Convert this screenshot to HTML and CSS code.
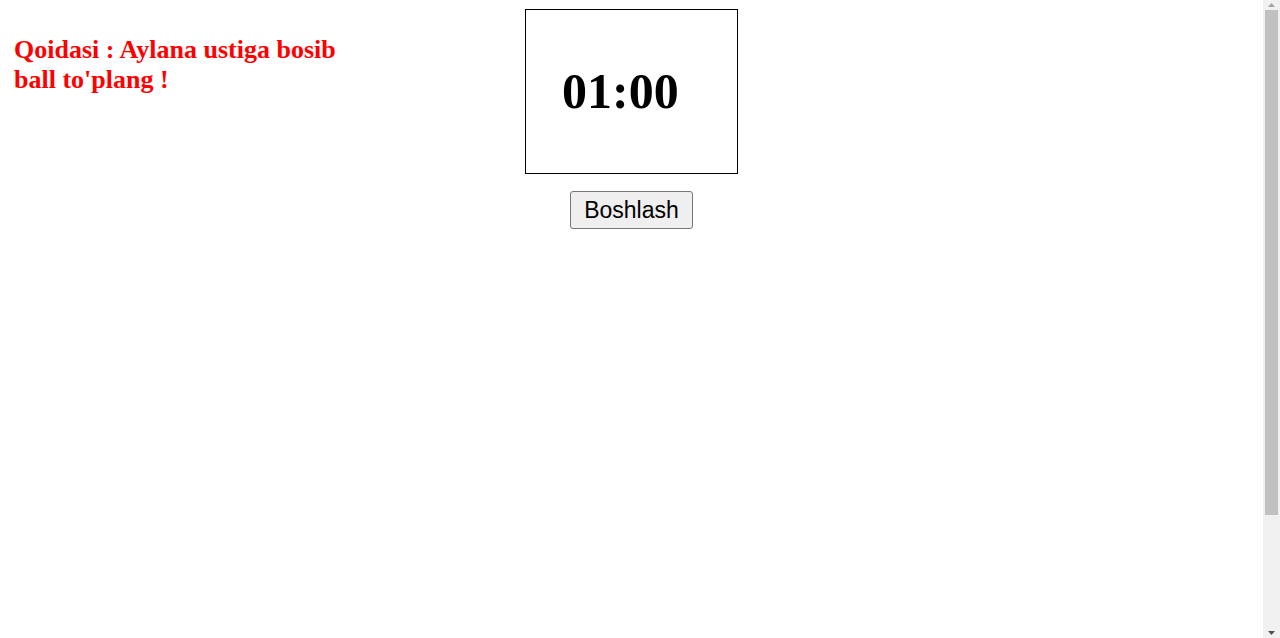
FILE: index.html
```html
<!DOCTYPE html>
<html lang="uz">
<head>
<meta charset="utf-8">
<title>O'yin</title>
<link rel="stylesheet" href="styles.css">
</head>
<body>
<div class="page">
  <div class="rules">
    <h2 class="rule-text">Qoidasi : Aylana ustiga bosib ball to'plang !</h2>
  </div>
  <div class="center">
    <div class="timer-box">
      <h1 class="timer">01:00</h1>
    </div>
    <button class="start-btn" type="button">Boshlash</button>
  </div>
  <div class="side"></div>
</div>
<div class="scrollbar" aria-hidden="true">
  <div class="sb-arrow">
    <svg width="17" height="10" viewBox="0 0 17 10"><polygon points="5,7 12,7 8.5,3" fill="#a3a3a3"/></svg>
  </div>
  <div class="sb-thumb"></div>
  <div class="sb-track"></div>
  <div class="sb-arrow">
    <svg width="17" height="10" viewBox="0 0 17 10"><polygon points="5,3 12,3 8.5,7" fill="#505050"/></svg>
  </div>
</div>
</body>
</html>
```

FILE: styles.css
```css
html, body {
  background: #ffffff;
}
body {
  margin: 8px 25px 8px 8px;
  font-family: "Liberation Serif", "Times New Roman", serif;
}
.page {
  display: grid;
  grid-template-columns: 1fr auto 1fr;
  min-height: 765px;
  align-items: start;
}
.rules {
  padding: 27px 0 0 6px;
}
.rule-text {
  margin: 0;
  max-width: 340px;
  color: #ff0000;
  font-family: "Liberation Serif", "Times New Roman", serif;
  font-size: 26px;
  font-weight: bold;
  line-height: 29.5px;
}
.center {
  display: flex;
  flex-direction: column;
  align-items: center;
  padding-top: 1px;
}
.timer-box {
  width: 211px;
  height: 163px;
  border: 1px solid #000000;
  box-sizing: content-box;
  padding: 0;
}
.timer {
  margin: 0;
  padding: 53px 0 0 36px;
  font-family: "Liberation Serif", "Times New Roman", serif;
  font-size: 50px;
  font-weight: bold;
  line-height: 57px;
  color: #000000;
}
.start-btn {
  margin-top: 17px;
  height: 38px;
  padding: 0 13px;
  font-family: "Liberation Sans", Arial, sans-serif;
  font-size: 23px;
  color: #000000;
  background: #efefef;
  border: 1px solid #767676;
  border-radius: 3px;
}
.scrollbar {
  position: fixed;
  top: 0;
  right: 0;
  width: 17px;
  height: 100vh;
  background: #f1f1f1;
  display: flex;
  flex-direction: column;
}
.sb-arrow {
  height: 10px;
  flex: none;
}
.sb-arrow svg {
  display: block;
}
.sb-thumb {
  flex: none;
  height: 505px;
  margin: 0 2px;
  background: #c1c1c1;
}
.sb-track {
  flex: 1;
}
```
